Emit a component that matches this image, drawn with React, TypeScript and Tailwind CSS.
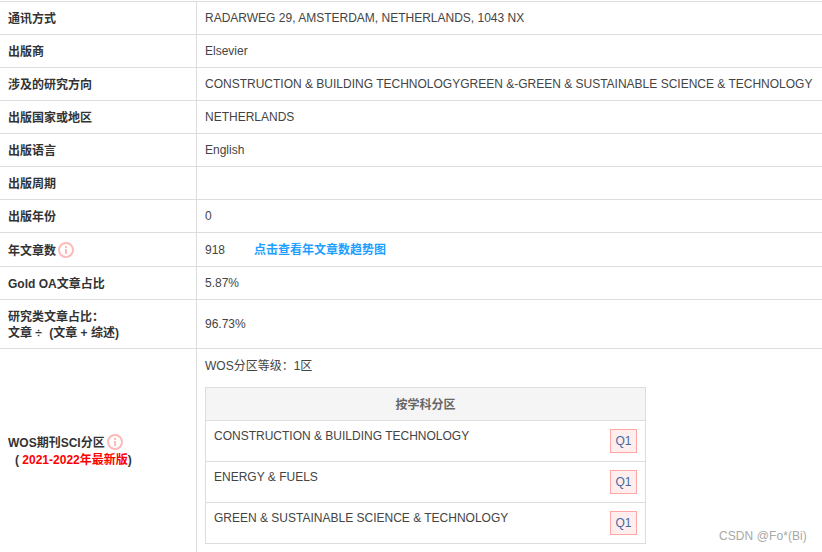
function Info() {
  return (
    <span className="ml-[2px] inline-flex h-4 w-4 shrink-0 flex-col items-center justify-center gap-[1px] rounded-full border-2 border-[#ffb9b9]">
      <span className="h-[2px] w-[2px] bg-[#ffb9b9]" />
      <span className="h-[5px] w-[2px] bg-[#ffb9b9]" />
    </span>
  );
}
function Row({ label, children, h, pt = false }: { label: React.ReactNode; children?: React.ReactNode; h: string; pt?: boolean }) {
  return (
    <div className={`flex border-b border-[#dddddd] ${h}`}>
      <div className="flex w-[197px] shrink-0 items-center border-r border-[#dddddd] pl-2 pt-[2px] text-[12px] font-bold leading-[16px] text-[#333333]">
        <div>{label}</div>
      </div>
      <div className={`flex-1 whitespace-nowrap pl-2 text-[12px] text-[#444444] ${pt ? "" : "flex items-center"}`}>{children}</div>
    </div>
  );
}
function SubRow({ name }: { name: string }) {
  return (
    <div className="flex h-[41px] justify-between border-t border-[#dddddd] px-2 text-[12px] text-[#444444]">
      <span className="pt-2 leading-[14px]">{name}</span>
      <span className="mt-2 flex h-6 w-[27px] items-center justify-center border border-[#ffa6a6] bg-[#ffeeee] text-[#44689f]">Q1</span>
    </div>
  );
}
export default function App() {
  return (
    <div className="relative h-[552px] w-[822px] overflow-hidden bg-white font-['Liberation_Sans','Noto_Sans_CJK_SC',sans-serif]">
      <div className="h-[2px] border-b border-[#dddddd]" />
      <Row h="h-[33px]" label="通讯方式"><span className="-mt-[1px]">RADARWEG 29, AMSTERDAM, NETHERLANDS, 1043 NX</span></Row>
      <Row h="h-[33px]" label="出版商"><span className="-mt-[1px]">Elsevier</span></Row>
      <Row h="h-[33px]" label="涉及的研究方向"><span className="-mt-[1px]">CONSTRUCTION &amp; BUILDING TECHNOLOGYGREEN &amp;-GREEN &amp; SUSTAINABLE SCIENCE &amp; TECHNOLOGY</span></Row>
      <Row h="h-[33px]" label="出版国家或地区"><span className="-mt-[1px]">NETHERLANDS</span></Row>
      <Row h="h-[33px]" label="出版语言"><span className="-mt-[1px]">English</span></Row>
      <Row h="h-[33px]" label="出版周期" />
      <Row h="h-[33px]" label="出版年份"><span>0</span></Row>
      <Row h="h-[34px]" label={<div className="flex items-center"><span>年文章数</span><span className="-mt-[2px] flex"><Info /></span></div>}>
        <span className="w-[49px]">918</span>
        <span className="font-bold text-[#1e9fff]">点击查看年文章数趋势图</span>
      </Row>
      <Row h="h-[33px]" label="Gold OA文章占比"><span>5.87%</span></Row>
      <Row h="h-[49px]" label={<>研究类文章占比：<br />文章 ÷ <span className="ml-[4px]">(文章 + 综述)</span></>}><span>96.73%</span></Row>
      <Row h="h-[204px]" pt label={<>
        <div className="flex items-center leading-[17px]"><span>WOS期刊SCI分区</span><span className="-mt-[2px] flex"><Info /></span></div>
        <div className="leading-[17px]"><span className="pl-[7px]">( </span><span className="text-[#ff0000]">2021-2022年最新版</span>)</div>
      </>}>
        <div className="pt-[9px] leading-[16px]">WOS分区等级：1区</div>
        <div className="mt-[13px] w-[441px] border border-[#dddddd]">
          <div className="flex h-8 items-center justify-center bg-[#f5f5f5] pt-[2px] font-bold text-[#666666]">按学科分区</div>
          <SubRow name="CONSTRUCTION & BUILDING TECHNOLOGY" />
          <SubRow name="ENERGY & FUELS" />
          <SubRow name="GREEN & SUSTAINABLE SCIENCE & TECHNOLOGY" />
        </div>
      </Row>
      <div className="absolute left-[719px] top-[527px] text-[12px] tracking-[0.08px] text-[#a8a8a8]">CSDN @Fo*(Bi)</div>
    </div>
  );
}
